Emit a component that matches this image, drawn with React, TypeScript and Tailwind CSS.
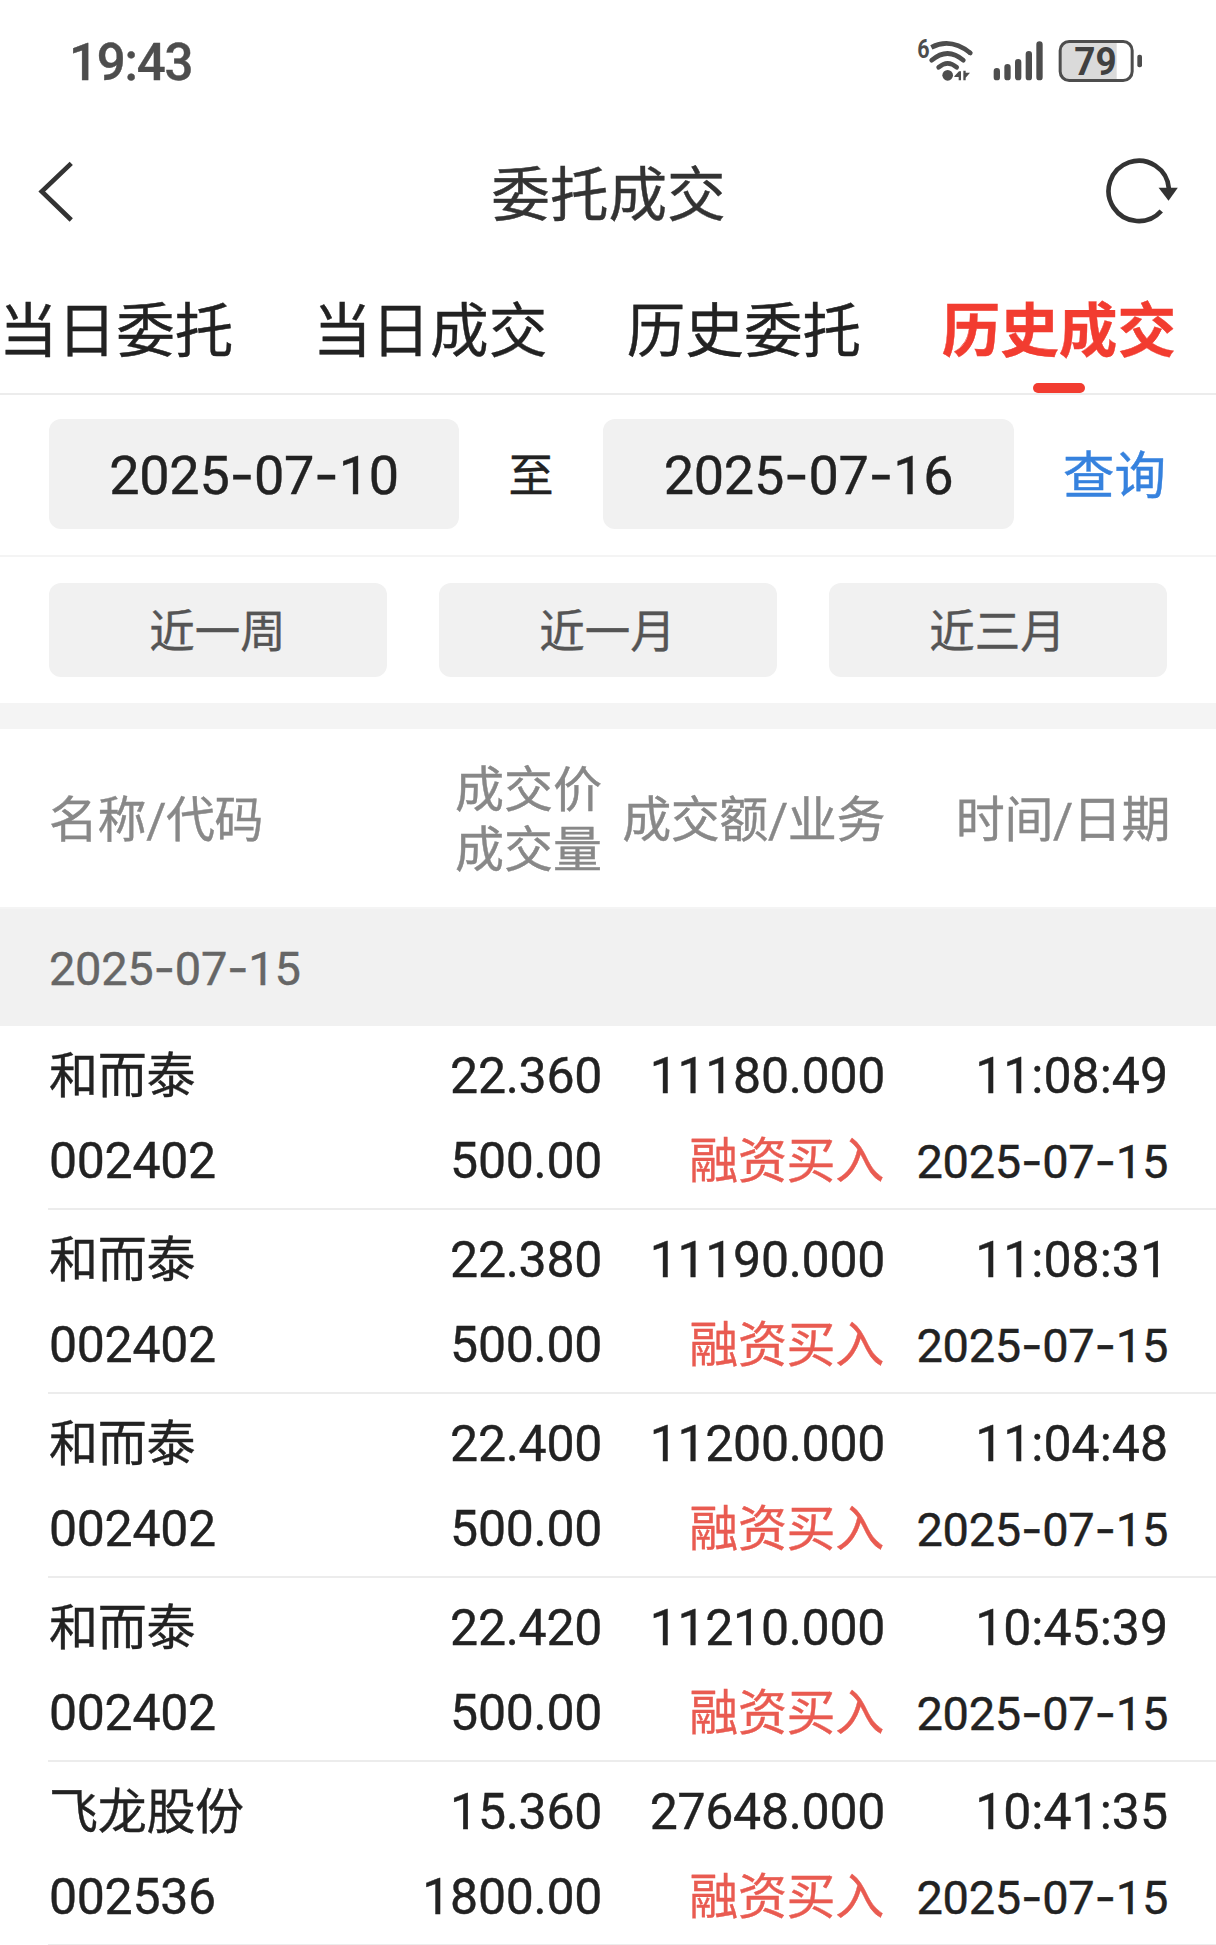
import { useState } from "react";
import { clsx } from "clsx";

type Deal = {
  name: string;
  code: string;
  price: string;
  volume: string;
  amount: string;
  business: string;
  time: string;
  date: string;
};

const TABS = ["当日委托", "当日成交", "历史委托", "历史成交"];
const RANGES = ["近一周", "近一月", "近三月"];

const DEALS: Deal[] = [
  { name: "和而泰", code: "002402", price: "22.360", volume: "500.00", amount: "11180.000", business: "融资买入", time: "11:08:49", date: "2025-07-15" },
  { name: "和而泰", code: "002402", price: "22.380", volume: "500.00", amount: "11190.000", business: "融资买入", time: "11:08:31", date: "2025-07-15" },
  { name: "和而泰", code: "002402", price: "22.400", volume: "500.00", amount: "11200.000", business: "融资买入", time: "11:04:48", date: "2025-07-15" },
  { name: "和而泰", code: "002402", price: "22.420", volume: "500.00", amount: "11210.000", business: "融资买入", time: "10:45:39", date: "2025-07-15" },
  { name: "飞龙股份", code: "002536", price: "15.360", volume: "1800.00", amount: "27648.000", business: "融资买入", time: "10:41:35", date: "2025-07-15" },
];

const COLUMNS = "grid grid-cols-[1fr_240px_283px_283px]";

// Roboto's hyphen is too short for dates, so the dashes come from Inter
function DateText({ value }: { value: string }) {
  const [y, m, d] = value.split("-");
  return (
    <span className="tracking-[-0.3px] whitespace-nowrap">
      {y}
      <span className="font-['Inter']">-</span>
      {m}
      <span className="font-['Inter']">-</span>
      {d}
    </span>
  );
}

function WifiIcon() {
  return (
    <svg viewBox="112 54 168 135" className="h-[45px] w-[56px] overflow-visible" fill="none" stroke="#4d4d4d" strokeWidth="14">
      <text x="113" y="115" fontSize="78" fontWeight="700" fill="#4d4d4d" stroke="none" textLength="37" lengthAdjust="spacingAndGlyphs">
        6
      </text>
      <path d="M155 82Q213 52 272 99" />
      <path d="M271 98.500L272 99M156 121Q204 80 251 121M177 142Q204 118 231 142" strokeLinecap="round" />
      <circle cx="204" cy="166" r="16" fill="#4d4d4d" stroke="none" />
      <path d="M224 169L238 154H244V181H237V171H224ZM251 152H258V158H271L258 173V181H251Z" fill="#4d4d4d" stroke="none" />
    </svg>
  );
}

function SignalIcon() {
  return (
    <svg viewBox="340 54 150 135" className="ml-5 h-[45px] w-[50px]" fill="none" stroke="#4d4d4d" strokeWidth="19" strokeLinecap="round">
      <path d="M351.500 153.500V171.500M383.500 141.500V171.500M415.500 126.500V171.500M447.500 102.500V171.500M479.500 73.500V171.500" />
    </svg>
  );
}

function BatteryIcon({ level }: { level: number }) {
  return (
    <svg viewBox="535 54 255 135" className="ml-[15px] h-[45px] w-[85px] overflow-visible">
      <path d="M566 65H711V181H566Q542 181 542 157V89Q542 65 566 65Z" fill="#dadada" />
      <rect x="541.500" y="64.500" width="216" height="117" rx="27" fill="none" stroke="#4d4d4d" strokeWidth="9" />
      <rect x="773" y="104" width="14" height="38" rx="6" fill="#4d4d4d" />
      <text x="584" y="165" fontSize="114" fontWeight="700" fill="#404040" textLength="127" lengthAdjust="spacingAndGlyphs">
        {level}
      </text>
    </svg>
  );
}

function StatusBar() {
  return (
    <div className="flex h-[120px] items-center pr-[73px] pl-[69px] text-[#4d4d4d]">
      <span className="flex-1 pt-[6px] text-[51px] leading-[60px] font-medium tracking-[-1.2px]">19:43</span>
      <div className="flex items-center">
        <WifiIcon />
        <SignalIcon />
        <BatteryIcon level={79} />
      </div>
    </div>
  );
}

function TitleBar() {
  return (
    <header className="flex h-[142px] items-center justify-between pr-[36px] pl-[37px]">
      <button type="button" className="w-[75px]">
        <svg viewBox="110 480 120 190" className="h-[63px] w-[40px]" fill="none" stroke="#333" strokeWidth="14">
          <path d="M213 490L124 575L213 661" />
        </svg>
      </button>
      <h1 className="pt-[10px] text-[58.6px] leading-[70px] text-[#333]">委托成交</h1>
      <button type="button">
        <svg viewBox="675 410 225 205" className="h-[68px] w-[75px]" fill="none" stroke="#333" strokeWidth="14">
          <path d="M867 505A91 91 0 1 0 844 573" />
          <path d="M836 503H894L866 542Z" fill="#333" stroke="none" />
        </svg>
      </button>
    </header>
  );
}

export default function App() {
  const [tab, setTab] = useState(3);

  return (
    <div className="h-[1945px] w-[1216px] overflow-hidden bg-white font-['Roboto','Noto_Sans_CJK_SC',sans-serif] text-[#222] [-webkit-text-stroke:0.4px_currentColor]">
      <StatusBar />
      <TitleBar />

      <nav className="flex h-[133px] justify-end gap-[79.500px] border-b-2 border-[#ececec] pr-[40px]">
        {TABS.map((label, i) => (
          <button
            key={label}
            type="button"
            onClick={() => setTab(i)}
            className={clsx(
              "relative shrink-0 pt-[3px] text-[58.6px] leading-[135px] whitespace-nowrap",
              i === tab ? "font-bold text-[#f23c30]" : "-left-px text-[#222]",
            )}
          >
            {label}
            {i === tab && (
              <span className="absolute bottom-0 left-1/2 h-[10px] w-[52px] -translate-x-1/2 rounded-full bg-[#f23c30]" />
            )}
          </button>
        ))}
      </nav>

      <section className="flex h-[162px] items-start border-b-2 border-[#f4f4f4] px-[49px] pt-[24px] leading-[110px]">
        <div className="h-[110px] w-[410px] rounded-xl bg-[#f1f1f1] text-center text-[54px] leading-[112px]">
          <DateText value="2025-07-10" />
        </div>
        <span className="w-[144px] pt-[3px] text-center text-[45px]">至</span>
        <div className="h-[110px] w-[411px] rounded-xl bg-[#f1f1f1] text-center text-[54px] leading-[112px]">
          <DateText value="2025-07-16" />
        </div>
        <button type="button" className="flex-1 pt-[3px] pr-px text-right text-[51.500px] text-[#3682de]">
          查询
        </button>
      </section>

      <section className="grid h-[146px] grid-cols-3 gap-[52px] px-[49px] py-[26px]">
        {RANGES.map((label) => (
          <button key={label} type="button" className="h-[94px] rounded-xl bg-[#f1f1f1] pt-[3px] pr-px text-[45.500px] leading-[93px] text-[#555]">
            {label}
          </button>
        ))}
      </section>

      <div className="h-[26px] bg-[#f4f4f4]" />

      <div className={clsx(COLUMNS, "h-[178px] items-center pt-[6px] pr-[48px] pl-[49px] text-[49px] leading-[60px] text-[#888]")}>
        <span className="tracking-[-0.4px]">名称/代码</span>
        <span className="text-right">
          成交价
          <br />
          成交量
        </span>
        <span className="text-right tracking-[-0.4px] whitespace-nowrap">成交额/业务</span>
        <span className="-mr-[2px] text-right tracking-[-0.4px] whitespace-nowrap">时间/日期</span>
      </div>

      <div className="h-[119px] border-t-2 border-[#f4f4f4] bg-[#f1f1f1] pl-[49px] text-[47px] leading-[117px] text-[#666]">
        <DateText value="2025-07-15" />
      </div>

      <ul>
        {DEALS.map((deal) => (
          <li
            key={deal.time}
            className={clsx(COLUMNS, "ml-[48px] h-[184px] auto-rows-[85px] border-b-2 border-[#ececec] pt-[8px] pr-[48px] pl-px text-right text-[50px] leading-[85px] tracking-[-0.3px]")}
          >
            <span className="text-left text-[49px]">{deal.name}</span>
            <span>{deal.price}</span>
            <span>{deal.amount}</span>
            <span className="tracking-normal">{deal.time}</span>
            <span className="text-left">{deal.code}</span>
            <span>{deal.volume}</span>
            <span className="pr-px text-[49px] text-[#e95b51]">{deal.business}</span>
            <span className="text-[47px] leading-[84px]">
              <DateText value={deal.date} />
            </span>
          </li>
        ))}
      </ul>
    </div>
  );
}
